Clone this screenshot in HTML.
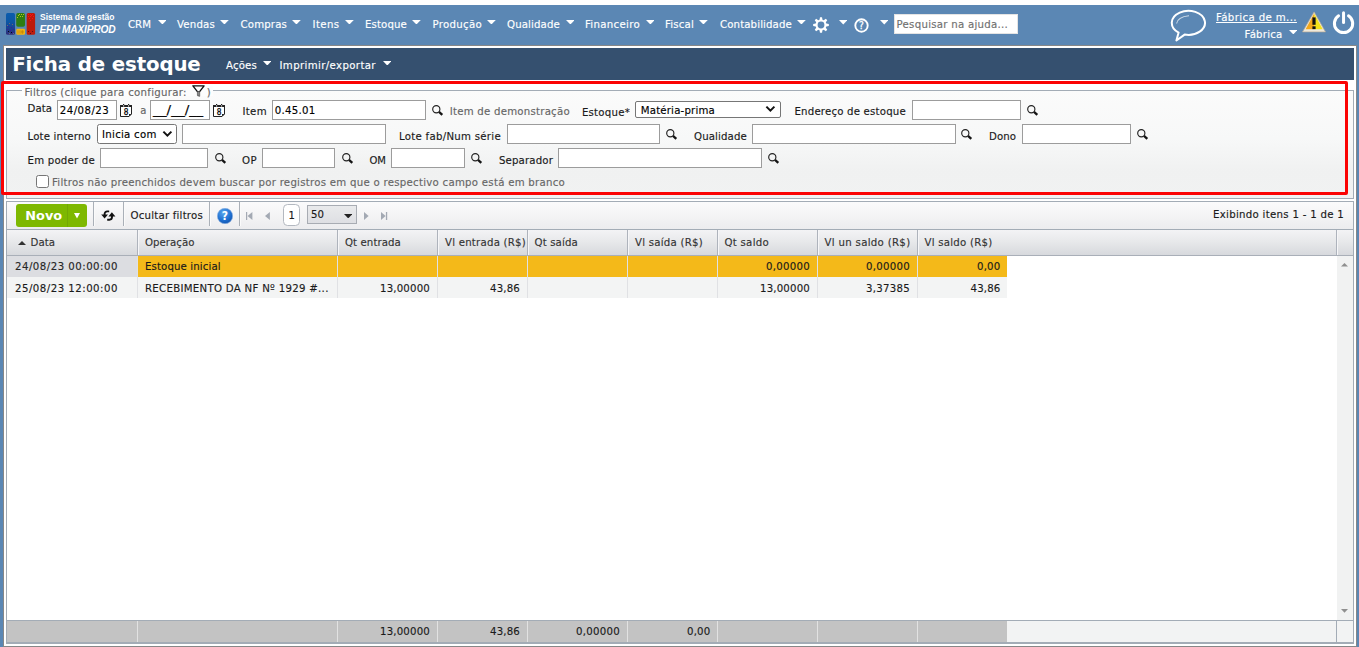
<!DOCTYPE html>
<html lang="pt-BR"><head><meta charset="utf-8"><title>Ficha de estoque</title>
<style>
html,body{margin:0;padding:0}
body{width:1359px;height:647px;overflow:hidden;background:#fff;position:relative;font-family:"DejaVu Sans Condensed","Liberation Sans",sans-serif}
body>div,body>svg,body>span{position:absolute;box-sizing:border-box}
.t{white-space:pre;line-height:1;-webkit-text-stroke:.14px}
.in{background:#fff;border:1px solid #b5b8c8}
.sel{background:#fff;border:1px solid #767676;border-radius:3px}

</style></head><body>
<div style="left:0px;top:5px;width:1359px;height:642px;background:#5b87b4"></div>
<div style="left:3px;top:45px;width:1354px;height:602px;background:#fff;border:1px solid #878787"></div>
<div style="left:6px;top:48px;width:1348px;height:32px;background:#35506f"></div>
<svg style="left:6px;top:13px" width="30" height="22" viewBox="0 0 30 22"><defs><linearGradient id="lb" x1="0" y1="0" x2="0" y2="1"><stop offset="0" stop-color="#0b5cad"/><stop offset=".4" stop-color="#0c57a5"/><stop offset=".75" stop-color="#1c3f8e"/><stop offset="1" stop-color="#33307a"/></linearGradient></defs>
<rect x="0" y="0" width="9" height="21.7" rx="1.5" fill="url(#lb)"/>
<g fill="#3a1a9a"><rect x="2" y="13" width="1" height="1"/><rect x="5" y="14" width="1" height="1"/><rect x="1" y="16" width="1" height="1"/><rect x="4" y="17" width="1" height="1"/><rect x="7" y="16" width="1" height="1"/><rect x="6" y="19" width="1" height="1"/></g>
<g fill="#060612"><rect x="2" y="18" width="1" height="1"/><rect x="5" y="19" width="1" height="1"/></g>
<g fill="#6a6a72"><rect x="3" y="10" width="1" height="1"/><rect x="6" y="11" width="1" height="1"/><rect x="1" y="12" width="1" height="1"/><rect x="3" y="20" width="1" height="1"/><rect x="7" y="20" width="1" height="1"/></g>
<rect x="10.2" y="0" width="8.8" height="13.8" rx="1.8" fill="#2e7c13"/>
<g fill="#b9c41a"><rect x="13" y="1" width="1" height="1"/><rect x="15" y="1" width="1" height="1"/><rect x="17" y="1" width="1" height="1"/><rect x="12" y="2" width="1" height="1"/><rect x="14" y="3" width="1" height="1"/><rect x="16" y="3" width="1" height="1"/><rect x="11" y="4" width="1" height="1"/></g>
<rect x="10.3" y="15.8" width="8.7" height="5.9" rx="1.2" fill="#f2b512"/>
<g fill="#c98a08"><rect x="11.5" y="17.3" width="1" height="3.4"/><rect x="13.5" y="17.3" width="1" height="3.4"/><rect x="15.3" y="17.3" width="2.2" height="3.4" rx="1"/></g>
<rect x="20.7" y="0" width="8.4" height="21.7" rx="1.5" fill="#bd1b0b"/>
<g fill="#ff1010"><rect x="22" y="1" width="1" height="1"/><rect x="24" y="1" width="1" height="1"/><rect x="26" y="1" width="1" height="1"/><rect x="25" y="2" width="1" height="1"/><rect x="22" y="3" width="1" height="1"/><rect x="24" y="3" width="1" height="1"/><rect x="27" y="3" width="1" height="1"/><rect x="23" y="5" width="1" height="1"/><rect x="26" y="5" width="1" height="1"/><rect x="24" y="7" width="1" height="1"/></g>
<g fill="#5a0a14"><rect x="22" y="18" width="1" height="1"/><rect x="26" y="18" width="1" height="1"/><rect x="24" y="20" width="1" height="1"/></g></svg>
<svg style="left:157.6px;top:19.8px" width="8.8" height="4.5" viewBox="0 0 8.8 4.5"><polygon points="0,0 8.8,0 4.4,4.5" fill="#fff"/></svg>
<svg style="left:220.1px;top:19.8px" width="8.8" height="4.5" viewBox="0 0 8.8 4.5"><polygon points="0,0 8.8,0 4.4,4.5" fill="#fff"/></svg>
<svg style="left:292.1px;top:19.8px" width="8.8" height="4.5" viewBox="0 0 8.8 4.5"><polygon points="0,0 8.8,0 4.4,4.5" fill="#fff"/></svg>
<svg style="left:345.1px;top:19.8px" width="8.8" height="4.5" viewBox="0 0 8.8 4.5"><polygon points="0,0 8.8,0 4.4,4.5" fill="#fff"/></svg>
<svg style="left:412.1px;top:19.8px" width="8.8" height="4.5" viewBox="0 0 8.8 4.5"><polygon points="0,0 8.8,0 4.4,4.5" fill="#fff"/></svg>
<svg style="left:487.1px;top:19.8px" width="8.8" height="4.5" viewBox="0 0 8.8 4.5"><polygon points="0,0 8.8,0 4.4,4.5" fill="#fff"/></svg>
<svg style="left:565.6px;top:19.8px" width="8.8" height="4.5" viewBox="0 0 8.8 4.5"><polygon points="0,0 8.8,0 4.4,4.5" fill="#fff"/></svg>
<svg style="left:645.6px;top:19.8px" width="8.8" height="4.5" viewBox="0 0 8.8 4.5"><polygon points="0,0 8.8,0 4.4,4.5" fill="#fff"/></svg>
<svg style="left:699.1px;top:19.8px" width="8.8" height="4.5" viewBox="0 0 8.8 4.5"><polygon points="0,0 8.8,0 4.4,4.5" fill="#fff"/></svg>
<svg style="left:797.1px;top:19.8px" width="8.8" height="4.5" viewBox="0 0 8.8 4.5"><polygon points="0,0 8.8,0 4.4,4.5" fill="#fff"/></svg>
<svg style="left:838.8px;top:20px" width="8.5" height="4.5" viewBox="0 0 8.5 4.5"><polygon points="0,0 8.5,0 4.25,4.5" fill="#fff"/></svg>
<svg style="left:879.7px;top:20px" width="8.5" height="4.5" viewBox="0 0 8.5 4.5"><polygon points="0,0 8.5,0 4.25,4.5" fill="#fff"/></svg>
<svg style="left:813px;top:17px" width="16" height="16" viewBox="0 0 16 16"><path fill-rule="evenodd" fill="#fff" d="M6.53,2.70 L6.98,0.17 L9.02,0.17 L9.47,2.70 L10.71,3.21 L12.81,1.74 L14.26,3.19 L12.79,5.29 L13.30,6.53 L15.83,6.98 L15.83,9.02 L13.30,9.47 L12.79,10.71 L14.26,12.81 L12.81,14.26 L10.71,12.79 L9.47,13.30 L9.02,15.83 L6.98,15.83 L6.53,13.30 L5.29,12.79 L3.19,14.26 L1.74,12.81 L3.21,10.71 L2.70,9.47 L0.17,9.02 L0.17,6.98 L2.70,6.53 L3.21,5.29 L1.74,3.19 L3.19,1.74 L5.29,3.21Z M11.4,8 A3.4,3.4 0 1 0 4.6,8 A3.4,3.4 0 1 0 11.4,8Z"/></svg>
<svg style="left:854.2px;top:17.5px" width="15" height="15" viewBox="0 0 15 15"><circle cx="7.5" cy="7.5" r="6.2" fill="none" stroke="#fff" stroke-width="1.9"/><text x="7.5" y="11.2" font-size="10" text-anchor="middle" fill="#fff" stroke="#fff" stroke-width=".3" font-family="DejaVu Sans Condensed,Liberation Sans,sans-serif">?</text></svg>
<div style="left:894px;top:14px;width:124px;height:20px;background:#fff;border:1px solid #e4e4e4"></div>
<svg style="left:1170px;top:9px" width="37" height="33" viewBox="0 0 37 33"><path d="M8.6 23.6A16.6 12.05 0 1 1 14.6 25.6L6.4 31.5Z" fill="none" stroke="#fff" stroke-width="2" stroke-linejoin="round"/><path d="M6.6 14.5C7.2 10.5 12 7.4 19 6.7" fill="none" stroke="#fff" stroke-width="1.1" opacity=".7"/></svg>
<svg style="left:1288.8px;top:30px" width="8.6" height="4.4" viewBox="0 0 8.6 4.4"><polygon points="0,0 8.6,0 4.3,4.4" fill="#fff"/></svg>
<svg style="left:1302px;top:11px" width="24" height="22" viewBox="0 0 24 22"><path d="M12.1 0.9L23.5 20.9H0.5Z" fill="#efe9dc" stroke="#b9ab95" stroke-width=".7" stroke-linejoin="round"/><path d="M12.15 2.6L3.6 18.2H12.15Z" fill="#f4a81a"/><path d="M12.15 2.6L20.7 18.2H12.15Z" fill="#f3e21a"/><rect x="10.4" y="6.4" width="3.2" height="7.4" fill="#111"/><rect x="10.4" y="15.3" width="3.2" height="2.8" fill="#111"/></svg>
<svg style="left:1331.5px;top:10px" width="23" height="25" viewBox="0 0 23 25"><path d="M6.57 5.78A9.15 9.15 0 1 0 16.53 5.78" fill="none" stroke="#fff" stroke-width="3" stroke-linecap="round"/><line x1="11.55" y1="2.7" x2="11.55" y2="12.4" stroke="#fff" stroke-width="3" stroke-linecap="round"/></svg>
<svg style="left:262.7px;top:60.8px" width="8.5" height="4.5" viewBox="0 0 8.5 4.5"><polygon points="0,0 8.5,0 4.25,4.5" fill="#fff"/></svg>
<svg style="left:382.7px;top:60.8px" width="8.5" height="4.5" viewBox="0 0 8.5 4.5"><polygon points="0,0 8.5,0 4.25,4.5" fill="#fff"/></svg>
<div style="left:6px;top:90px;width:1348px;height:109px;border:1px solid #a3acb6;background:linear-gradient(#fbfbfb,#f7f8f8 45%,#f0f1f1 75%,#f1f2f2)"></div>
<div style="left:22px;top:86px;width:191px;height:10px;background:#fdfdfd"></div>
<svg style="left:191.5px;top:85px" width="13" height="12" viewBox="0 0 13 12"><path d="M0.9 0.8H12.1L7.6 6.6H5.4Z" fill="#fdfdfd" stroke="#111" stroke-width="1.35" stroke-linejoin="round"/><rect x="5.4" y="6.4" width="2.3" height="4.8" fill="#888"/><path d="M5.4 6.5V10.4L7.7 11.4V6.5" fill="none" stroke="#444" stroke-width=".6"/></svg>
<div style="left:57px;top:100px;width:60px;height:20px;background:#fff;border:1px solid #9c9c9c"></div>
<svg style="left:120px;top:104px" width="12" height="13" viewBox="0 0 12 13"><path d="M0.5 1.6H11.5V10L9 12.5H0.5Z" fill="#fff" stroke="#222" stroke-width="1"/><rect x="0" y="1.1" width="12" height="1.9" fill="#222"/><rect x="3" y="0" width="1.2" height="1.4" fill="#222"/><rect x="8" y="0" width="1.2" height="1.4" fill="#222"/><circle cx="3.6" cy="1.9" r=".65" fill="#fff"/><circle cx="8.6" cy="1.9" r=".65" fill="#fff"/><polygon points="11.6,10 9,12.6 9,10" fill="#222"/><text x="6" y="10.9" font-size="8.2" text-anchor="middle" fill="#000" stroke="#000" stroke-width=".25" font-family="DejaVu Sans Condensed,Liberation Sans,sans-serif">8</text></svg>
<div style="left:150px;top:100px;width:60px;height:20px;background:#fff;border:1px solid #9c9c9c"></div>
<svg style="left:213px;top:104px" width="12" height="13" viewBox="0 0 12 13"><path d="M0.5 1.6H11.5V10L9 12.5H0.5Z" fill="#fff" stroke="#222" stroke-width="1"/><rect x="0" y="1.1" width="12" height="1.9" fill="#222"/><rect x="3" y="0" width="1.2" height="1.4" fill="#222"/><rect x="8" y="0" width="1.2" height="1.4" fill="#222"/><circle cx="3.6" cy="1.9" r=".65" fill="#fff"/><circle cx="8.6" cy="1.9" r=".65" fill="#fff"/><polygon points="11.6,10 9,12.6 9,10" fill="#222"/><text x="6" y="10.9" font-size="8.2" text-anchor="middle" fill="#000" stroke="#000" stroke-width=".25" font-family="DejaVu Sans Condensed,Liberation Sans,sans-serif">8</text></svg>
<div style="left:272px;top:100px;width:154px;height:20px;background:#fff;border:1px solid #9c9c9c"></div>
<svg style="left:431.5px;top:104.3px" width="12" height="13" viewBox="0 0 12 13"><circle cx="4.3" cy="5.2" r="3.6" fill="none" stroke="#222" stroke-width="1.15"/><line x1="7" y1="7.9" x2="10.3" y2="10.9" stroke="#151515" stroke-width="2.3"/></svg>
<div style="left:635px;top:101px;width:146px;height:17px;background:#fff;border:1px solid #767676;border-radius:2px"></div>
<svg style="left:765px;top:105px" width="11" height="8" viewBox="0 0 11 8"><path d="M1.4 1.6L5.4 5.6L9.4 1.6" fill="none" stroke="#111" stroke-width="2"/></svg>
<div style="left:912px;top:100px;width:109px;height:20px;background:#fff;border:1px solid #9c9c9c"></div>
<svg style="left:1026.5px;top:104.3px" width="12" height="13" viewBox="0 0 12 13"><circle cx="4.3" cy="5.2" r="3.6" fill="none" stroke="#222" stroke-width="1.15"/><line x1="7" y1="7.9" x2="10.3" y2="10.9" stroke="#151515" stroke-width="2.3"/></svg>
<div style="left:97px;top:124px;width:80px;height:20px;background:#fff;border:1px solid #767676;border-radius:2.5px"></div>
<svg style="left:162px;top:130px" width="11" height="8" viewBox="0 0 11 8"><path d="M1.4 1.6L5.4 5.6L9.4 1.6" fill="none" stroke="#111" stroke-width="2"/></svg>
<div style="left:182px;top:124px;width:204px;height:20px;background:#fff;border:1px solid #9c9c9c"></div>
<div style="left:507px;top:124px;width:153px;height:20px;background:#fff;border:1px solid #9c9c9c"></div>
<svg style="left:666px;top:128.3px" width="12" height="13" viewBox="0 0 12 13"><circle cx="4.3" cy="5.2" r="3.6" fill="none" stroke="#222" stroke-width="1.15"/><line x1="7" y1="7.9" x2="10.3" y2="10.9" stroke="#151515" stroke-width="2.3"/></svg>
<div style="left:752px;top:124px;width:204px;height:20px;background:#fff;border:1px solid #9c9c9c"></div>
<svg style="left:961px;top:128.3px" width="12" height="13" viewBox="0 0 12 13"><circle cx="4.3" cy="5.2" r="3.6" fill="none" stroke="#222" stroke-width="1.15"/><line x1="7" y1="7.9" x2="10.3" y2="10.9" stroke="#151515" stroke-width="2.3"/></svg>
<div style="left:1022px;top:124px;width:109px;height:20px;background:#fff;border:1px solid #9c9c9c"></div>
<svg style="left:1136.5px;top:128.3px" width="12" height="13" viewBox="0 0 12 13"><circle cx="4.3" cy="5.2" r="3.6" fill="none" stroke="#222" stroke-width="1.15"/><line x1="7" y1="7.9" x2="10.3" y2="10.9" stroke="#151515" stroke-width="2.3"/></svg>
<div style="left:100px;top:148px;width:108px;height:20px;background:#fff;border:1px solid #9c9c9c"></div>
<svg style="left:215px;top:152.3px" width="12" height="13" viewBox="0 0 12 13"><circle cx="4.3" cy="5.2" r="3.6" fill="none" stroke="#222" stroke-width="1.15"/><line x1="7" y1="7.9" x2="10.3" y2="10.9" stroke="#151515" stroke-width="2.3"/></svg>
<div style="left:262px;top:148px;width:73px;height:20px;background:#fff;border:1px solid #9c9c9c"></div>
<svg style="left:342px;top:152.3px" width="12" height="13" viewBox="0 0 12 13"><circle cx="4.3" cy="5.2" r="3.6" fill="none" stroke="#222" stroke-width="1.15"/><line x1="7" y1="7.9" x2="10.3" y2="10.9" stroke="#151515" stroke-width="2.3"/></svg>
<div style="left:391px;top:148px;width:74px;height:20px;background:#fff;border:1px solid #9c9c9c"></div>
<svg style="left:471px;top:152.3px" width="12" height="13" viewBox="0 0 12 13"><circle cx="4.3" cy="5.2" r="3.6" fill="none" stroke="#222" stroke-width="1.15"/><line x1="7" y1="7.9" x2="10.3" y2="10.9" stroke="#151515" stroke-width="2.3"/></svg>
<div style="left:558px;top:148px;width:204px;height:20px;background:#fff;border:1px solid #9c9c9c"></div>
<svg style="left:767.5px;top:152.3px" width="12" height="13" viewBox="0 0 12 13"><circle cx="4.3" cy="5.2" r="3.6" fill="none" stroke="#222" stroke-width="1.15"/><line x1="7" y1="7.9" x2="10.3" y2="10.9" stroke="#151515" stroke-width="2.3"/></svg>
<div style="left:36px;top:175px;width:13px;height:13px;background:#fff;border:1px solid #767676;border-radius:2.5px"></div>
<div style="left:1px;top:81px;width:1347px;height:114px;border:3px solid #fb0303;border-radius:2px"></div>
<div style="left:6px;top:201px;width:1348px;height:28px;border:1px solid #a3acb6;border-bottom:none;background:linear-gradient(#fbfbfc,#f4f4f5 50%,#ececee)"></div>
<div style="left:16px;top:204px;width:71px;height:23px;background:#7eb801;border-radius:3px"></div>
<div style="left:67px;top:204px;width:1px;height:23px;background:#73a805"></div>
<svg style="left:74px;top:213.4px" width="6" height="5.6" viewBox="0 0 6 5.6"><polygon points="0,0 6,0 3,5.6" fill="#fff"/></svg>
<div style="left:93px;top:202px;width:1px;height:24px;background:#aab0b8"></div>
<div style="left:94px;top:202px;width:1px;height:24px;background:#fafafa"></div>
<div style="left:123px;top:202px;width:1px;height:24px;background:#aab0b8"></div>
<div style="left:124px;top:202px;width:1px;height:24px;background:#fafafa"></div>
<div style="left:209px;top:202px;width:1px;height:24px;background:#aab0b8"></div>
<div style="left:210px;top:202px;width:1px;height:24px;background:#fafafa"></div>
<div style="left:239px;top:202px;width:1px;height:24px;background:#aab0b8"></div>
<div style="left:240px;top:202px;width:1px;height:24px;background:#fafafa"></div>
<svg style="left:101px;top:209.5px" width="15" height="11" viewBox="0 0 15 11"><path d="M8.2 1.4H6.2A2.6 2.6 0 0 0 3.6 4V5.4" fill="none" stroke="#111" stroke-width="1.9"/><polygon points="0.2,4.6 7,4.6 3.6,8.4" fill="#111"/><path d="M6.2 9.7H8.4A2.6 2.6 0 0 0 11 7.1V5.8" fill="none" stroke="#111" stroke-width="1.9"/><polygon points="7.4,6.4 14.4,6.4 10.9,2.2" fill="#111"/></svg>
<svg style="left:217px;top:208px" width="16" height="16" viewBox="0 0 16 16"><defs><radialGradient id="hg" cx=".4" cy=".3" r=".8"><stop offset="0" stop-color="#5aa7ee"/><stop offset=".6" stop-color="#1f6fd0"/><stop offset="1" stop-color="#0f4fa8"/></radialGradient></defs><circle cx="8" cy="8" r="7.7" fill="url(#hg)" stroke="#8fb4e2" stroke-width=".6"/><text x="8" y="12.3" font-size="12" font-weight="bold" text-anchor="middle" fill="#fff" font-family="DejaVu Sans Condensed,Liberation Sans,sans-serif">?</text></svg>
<svg style="left:245.7px;top:212px" width="7" height="8" viewBox="0 0 7 8"><rect x="0" y="0" width="1.2" height="8" fill="#a3a9b3"/><polygon points="6.4,0 6.4,8 1.5,4" fill="#a3a9b3"/></svg>
<svg style="left:264.5px;top:212px" width="5" height="8" viewBox="0 0 5 8"><polygon points="4.9,0 4.9,8 0,4" fill="#a3a9b3"/></svg>
<div style="left:283px;top:204px;width:17px;height:22px;background:#fff;border:1px solid #b3b8c0;border-radius:4.5px"></div>
<div style="left:307px;top:205px;width:50px;height:19px;background:linear-gradient(#e9eaec,#dedfe3);border:1px solid #a8acb3"></div>
<svg style="left:343.7px;top:213.9px" width="8.4" height="4.4" viewBox="0 0 8.4 4.4"><polygon points="0,0 8.4,0 4.2,4.4" fill="#222"/></svg>
<svg style="left:363.9px;top:212px" width="5" height="8" viewBox="0 0 5 8"><polygon points="0,0 0,8 4.6,4" fill="#a3a9b3"/></svg>
<svg style="left:381px;top:212px" width="7" height="8" viewBox="0 0 7 8"><polygon points="0,0 0,8 4.6,4" fill="#a3a9b3"/><rect x="4.9" y="0" width="1.3" height="8" fill="#a3a9b3"/></svg>
<div style="left:6px;top:229px;width:1348px;height:415px;border:1px solid #a3acb6;background:#fff"></div>
<div style="left:7px;top:230px;width:1346px;height:25px;background:linear-gradient(#f3f3f5,#e8e9eb 45%,#d7d9dd)"></div>
<div style="left:7px;top:255px;width:1346px;height:1px;background:#a9afb8"></div>
<div style="left:137px;top:230px;width:1px;height:25px;background:#aeb3bc"></div>
<div style="left:138px;top:230px;width:1px;height:25px;background:#f6f6f8"></div>
<div style="left:337px;top:230px;width:1px;height:25px;background:#aeb3bc"></div>
<div style="left:338px;top:230px;width:1px;height:25px;background:#f6f6f8"></div>
<div style="left:437px;top:230px;width:1px;height:25px;background:#aeb3bc"></div>
<div style="left:438px;top:230px;width:1px;height:25px;background:#f6f6f8"></div>
<div style="left:527px;top:230px;width:1px;height:25px;background:#aeb3bc"></div>
<div style="left:528px;top:230px;width:1px;height:25px;background:#f6f6f8"></div>
<div style="left:627px;top:230px;width:1px;height:25px;background:#aeb3bc"></div>
<div style="left:628px;top:230px;width:1px;height:25px;background:#f6f6f8"></div>
<div style="left:717px;top:230px;width:1px;height:25px;background:#aeb3bc"></div>
<div style="left:718px;top:230px;width:1px;height:25px;background:#f6f6f8"></div>
<div style="left:817px;top:230px;width:1px;height:25px;background:#aeb3bc"></div>
<div style="left:818px;top:230px;width:1px;height:25px;background:#f6f6f8"></div>
<div style="left:917px;top:230px;width:1px;height:25px;background:#aeb3bc"></div>
<div style="left:918px;top:230px;width:1px;height:25px;background:#f6f6f8"></div>
<div style="left:1336px;top:230px;width:1px;height:25px;background:#aeb3bc"></div>
<div style="left:1337px;top:230px;width:1px;height:25px;background:#f6f6f8"></div>
<svg style="left:18px;top:240.8px" width="8" height="4" viewBox="0 0 8 4"><polygon points="0,4 8,4 4,0" fill="#333"/></svg>
<div style="left:7px;top:256px;width:130px;height:21px;background:#dcdde1"></div>
<div style="left:137px;top:256px;width:870px;height:21px;background:#f4b919"></div>
<div style="left:7px;top:277px;width:1000px;height:21px;background:#f3f4f4"></div>
<div style="left:137px;top:256px;width:1px;height:42px;background:#e0e1e4"></div>
<div style="left:337px;top:256px;width:1px;height:42px;background:#e0e1e4"></div>
<div style="left:437px;top:256px;width:1px;height:42px;background:#e0e1e4"></div>
<div style="left:527px;top:256px;width:1px;height:42px;background:#e0e1e4"></div>
<div style="left:627px;top:256px;width:1px;height:42px;background:#e0e1e4"></div>
<div style="left:717px;top:256px;width:1px;height:42px;background:#e0e1e4"></div>
<div style="left:817px;top:256px;width:1px;height:42px;background:#e0e1e4"></div>
<div style="left:917px;top:256px;width:1px;height:42px;background:#e0e1e4"></div>
<div style="left:917px;top:256px;width:0px;height:0px;"></div>
<div style="left:1337px;top:256px;width:16px;height:364px;background:#f1f2f2"></div>
<svg style="left:1340.5px;top:263px" width="7" height="3.6" viewBox="0 0 7 3.6"><polygon points="0,3.6 7,3.6 3.5,0" fill="#8f8f8f"/></svg>
<svg style="left:1341px;top:609px" width="7" height="3.8" viewBox="0 0 7 3.8"><polygon points="0,0 7,0 3.5,3.8" fill="#8f8f8f"/></svg>
<div style="left:7px;top:620px;width:1346px;height:1px;background:#a3acb6"></div>
<div style="left:7px;top:621px;width:1000px;height:21px;background:#c3c3c3"></div>
<div style="left:1007px;top:621px;width:346px;height:21px;background:#f2f3f3"></div>
<div style="left:137px;top:621px;width:1px;height:21px;background:#e2e2e2"></div>
<div style="left:337px;top:621px;width:1px;height:21px;background:#e2e2e2"></div>
<div style="left:437px;top:621px;width:1px;height:21px;background:#e2e2e2"></div>
<div style="left:527px;top:621px;width:1px;height:21px;background:#e2e2e2"></div>
<div style="left:627px;top:621px;width:1px;height:21px;background:#e2e2e2"></div>
<div style="left:717px;top:621px;width:1px;height:21px;background:#e2e2e2"></div>
<div style="left:817px;top:621px;width:1px;height:21px;background:#e2e2e2"></div>
<div style="left:917px;top:621px;width:1px;height:21px;background:#e2e2e2"></div>
<div style="left:1336px;top:621px;width:1px;height:21px;background:#a3acb6"></div>
<div style="left:7px;top:642px;width:1346px;height:2px;background:#a3acb6"></div>
<span class="t" style="left:40px;top:13.00px;font-size:8.47px;color:#fff;font-family:'Liberation Sans',sans-serif;font-weight:bold;-webkit-text-stroke:0;">Sistema de gestão</span>
<span class="t" style="left:39.5px;top:25.00px;font-size:10.19px;color:#fff;font-family:'Liberation Sans',sans-serif;font-weight:bold;-webkit-text-stroke:0;font-style:italic;letter-spacing:-0.195px;">ERP MAXIPROD</span>
<span class="t" style="left:128px;top:19.00px;font-size:11.32px;color:#fff;letter-spacing:0.006px;">CRM</span>
<span class="t" style="left:177px;top:19.00px;font-size:11.32px;color:#fff;letter-spacing:0.195px;">Vendas</span>
<span class="t" style="left:240.5px;top:19.00px;font-size:11.32px;color:#fff;letter-spacing:0.147px;">Compras</span>
<span class="t" style="left:312.5px;top:19.00px;font-size:11.32px;color:#fff;letter-spacing:0.395px;">Itens</span>
<span class="t" style="left:365px;top:19.00px;font-size:11.32px;color:#fff;letter-spacing:0.120px;">Estoque</span>
<span class="t" style="left:432.5px;top:19.00px;font-size:11.32px;color:#fff;letter-spacing:0.299px;">Produção</span>
<span class="t" style="left:507px;top:19.00px;font-size:11.32px;color:#fff;letter-spacing:0.131px;">Qualidade</span>
<span class="t" style="left:585px;top:19.00px;font-size:11.32px;color:#fff;letter-spacing:0.311px;">Financeiro</span>
<span class="t" style="left:665px;top:19.00px;font-size:11.32px;color:#fff;letter-spacing:0.192px;">Fiscal</span>
<span class="t" style="left:720px;top:19.00px;font-size:11.32px;color:#fff;letter-spacing:0.120px;">Contabilidade</span>
<span class="t" style="left:896.6px;top:19.00px;font-size:11.32px;color:#707070;letter-spacing:0.266px;">Pesquisar na ajuda...</span>
<span class="t" style="left:1216px;top:12.00px;font-size:11.32px;color:#fff;letter-spacing:0.385px;text-decoration:underline;text-underline-offset:1px;text-decoration-thickness:1px;">Fábrica de m...</span>
<span class="t" style="left:1244.6px;top:29.00px;font-size:11.32px;color:#fff;letter-spacing:0.230px;">Fábrica</span>
<span class="t" style="left:12.2px;top:55.00px;font-size:19.79px;color:#fff;font-family:'DejaVu Sans','DejaVu Sans Condensed',sans-serif;font-weight:bold;-webkit-text-stroke:0;letter-spacing:-0.141px;">Ficha de estoque</span>
<span class="t" style="left:226px;top:60.00px;font-size:11.32px;color:#fff;letter-spacing:0.165px;">Ações</span>
<span class="t" style="left:279.5px;top:60.00px;font-size:11.32px;color:#fff;letter-spacing:0.372px;">Imprimir/exportar</span>
<span class="t" style="left:24.5px;top:87.00px;font-size:11.32px;color:#666;letter-spacing:0.299px;">Filtros (clique para configurar: </span>
<span class="t" style="left:206.8px;top:87.00px;font-size:11.32px;color:#666;">)</span>
<span class="t" style="left:27.5px;top:103.00px;font-size:11.32px;color:#1a1a1a;letter-spacing:0.045px;">Data</span>
<span class="t" style="left:59.8px;top:105.00px;font-size:11.32px;color:#000;letter-spacing:0.470px;">24/08/23</span>
<span class="t" style="left:140.2px;top:105.00px;font-size:11.10px;color:#666;">a</span>
<span class="t" style="left:152.5px;top:104.00px;font-size:12.60px;color:#000;transform:scaleX(1.2008);transform-origin:0 0;">__/__/__</span>
<span class="t" style="left:242.4px;top:106.00px;font-size:11.32px;color:#1a1a1a;letter-spacing:0.353px;">Item</span>
<span class="t" style="left:274.8px;top:105.00px;font-size:11.32px;color:#000;letter-spacing:0.248px;">0.45.01</span>
<span class="t" style="left:449.7px;top:106.00px;font-size:11.32px;color:#666;letter-spacing:0.238px;">Item de demonstração</span>
<span class="t" style="left:581.9px;top:107.00px;font-size:11.32px;color:#1a1a1a;letter-spacing:0.231px;">Estoque*</span>
<span class="t" style="left:640.75px;top:105.00px;font-size:11.32px;color:#000;letter-spacing:0.183px;">Matéria-prima</span>
<span class="t" style="left:794.5px;top:106.00px;font-size:11.32px;color:#1a1a1a;letter-spacing:0.191px;">Endereço de estoque</span>
<span class="t" style="left:27.5px;top:131.00px;font-size:11.32px;color:#1a1a1a;letter-spacing:0.173px;">Lote interno</span>
<span class="t" style="left:102.1px;top:129.00px;font-size:11.32px;color:#000;letter-spacing:0.255px;">Inicia com</span>
<span class="t" style="left:399px;top:131.00px;font-size:11.32px;color:#1a1a1a;letter-spacing:0.277px;">Lote fab/Num série</span>
<span class="t" style="left:694px;top:131.00px;font-size:11.32px;color:#1a1a1a;letter-spacing:0.131px;">Qualidade</span>
<span class="t" style="left:989px;top:131.00px;font-size:11.32px;color:#1a1a1a;letter-spacing:0.059px;">Dono</span>
<span class="t" style="left:27.5px;top:155.00px;font-size:11.32px;color:#1a1a1a;letter-spacing:0.210px;">Em poder de</span>
<span class="t" style="left:242px;top:155.00px;font-size:11.32px;color:#1a1a1a;letter-spacing:0.420px;">OP</span>
<span class="t" style="left:369.5px;top:155.00px;font-size:11.12px;color:#1a1a1a;">OM</span>
<span class="t" style="left:499px;top:155.00px;font-size:11.32px;color:#1a1a1a;letter-spacing:0.138px;">Separador</span>
<span class="t" style="left:52px;top:177.00px;font-size:11.32px;color:#666;letter-spacing:0.267px;">Filtros não preenchidos devem buscar por registros em que o respectivo campo está em branco</span>
<span class="t" style="left:25.3px;top:210.00px;font-size:12.89px;color:#fff;font-family:'DejaVu Sans','DejaVu Sans Condensed',sans-serif;font-weight:bold;-webkit-text-stroke:0;">Novo</span>
<span class="t" style="left:130.6px;top:210.00px;font-size:11.32px;color:#1a1a1a;letter-spacing:0.209px;">Ocultar filtros</span>
<span class="t" style="left:288.6px;top:210.00px;font-size:11.10px;color:#1a1a1a;">1</span>
<span class="t" style="left:311px;top:209.00px;font-size:11.32px;color:#1a1a1a;letter-spacing:0.021px;">50</span>
<span class="t" style="left:1213.1px;top:209.00px;font-size:11.32px;color:#1a1a1a;letter-spacing:0.286px;">Exibindo itens 1 - 1 de 1</span>
<span class="t" style="left:30.5px;top:237.00px;font-size:11.32px;color:#333;letter-spacing:0.045px;">Data</span>
<span class="t" style="left:145px;top:237.00px;font-size:11.32px;color:#333;letter-spacing:0.031px;">Operação</span>
<span class="t" style="left:345px;top:237.00px;font-size:11.32px;color:#333;letter-spacing:0.090px;">Qt entrada</span>
<span class="t" style="left:445px;top:237.00px;font-size:11.32px;color:#333;letter-spacing:0.225px;">Vl entrada (R$)</span>
<span class="t" style="left:534.5px;top:237.00px;font-size:11.32px;color:#333;letter-spacing:0.146px;">Qt saída</span>
<span class="t" style="left:635px;top:237.00px;font-size:11.32px;color:#333;letter-spacing:0.242px;">Vl saída (R$)</span>
<span class="t" style="left:724.5px;top:237.00px;font-size:11.32px;color:#333;letter-spacing:0.273px;">Qt saldo</span>
<span class="t" style="left:824.5px;top:237.00px;font-size:11.32px;color:#333;letter-spacing:0.313px;">Vl un saldo (R$)</span>
<span class="t" style="left:924.5px;top:237.00px;font-size:11.32px;color:#333;letter-spacing:0.242px;">Vl saldo (R$)</span>
<span class="t" style="left:15px;top:261.00px;font-size:11.32px;color:#262626;letter-spacing:0.487px;">24/08/23 00:00:00</span>
<span class="t" style="left:145px;top:261.00px;font-size:11.32px;color:#1a1a1a;letter-spacing:0.119px;">Estoque inicial</span>
<span class="t" style="left:766px;top:261.00px;font-size:11.32px;color:#1a1a1a;letter-spacing:0.270px;">0,00000</span>
<span class="t" style="left:866px;top:261.00px;font-size:11.32px;color:#1a1a1a;letter-spacing:0.270px;">0,00000</span>
<span class="t" style="left:977px;top:261.00px;font-size:11.32px;color:#1a1a1a;letter-spacing:0.207px;">0,00</span>
<span class="t" style="left:15px;top:283.00px;font-size:11.32px;color:#1a1a1a;letter-spacing:0.487px;">25/08/23 12:00:00</span>
<span class="t" style="left:145px;top:283.00px;font-size:11.32px;color:#1a1a1a;letter-spacing:0.295px;">RECEBIMENTO DA NF Nº 1929 #...</span>
<span class="t" style="left:380px;top:283.00px;font-size:11.32px;color:#1a1a1a;letter-spacing:0.176px;">13,00000</span>
<span class="t" style="left:490px;top:283.00px;font-size:11.32px;color:#1a1a1a;letter-spacing:0.170px;">43,86</span>
<span class="t" style="left:760px;top:283.00px;font-size:11.32px;color:#1a1a1a;letter-spacing:0.176px;">13,00000</span>
<span class="t" style="left:866px;top:283.00px;font-size:11.32px;color:#1a1a1a;letter-spacing:0.270px;">3,37385</span>
<span class="t" style="left:970.5px;top:283.00px;font-size:11.32px;color:#1a1a1a;letter-spacing:0.170px;">43,86</span>
<span class="t" style="left:380px;top:626.00px;font-size:11.32px;color:#1a1a1a;letter-spacing:0.176px;">13,00000</span>
<span class="t" style="left:490px;top:626.00px;font-size:11.32px;color:#1a1a1a;letter-spacing:0.170px;">43,86</span>
<span class="t" style="left:576px;top:626.00px;font-size:11.32px;color:#1a1a1a;letter-spacing:0.270px;">0,00000</span>
<span class="t" style="left:687px;top:626.00px;font-size:11.32px;color:#1a1a1a;letter-spacing:0.207px;">0,00</span>
</body></html>
